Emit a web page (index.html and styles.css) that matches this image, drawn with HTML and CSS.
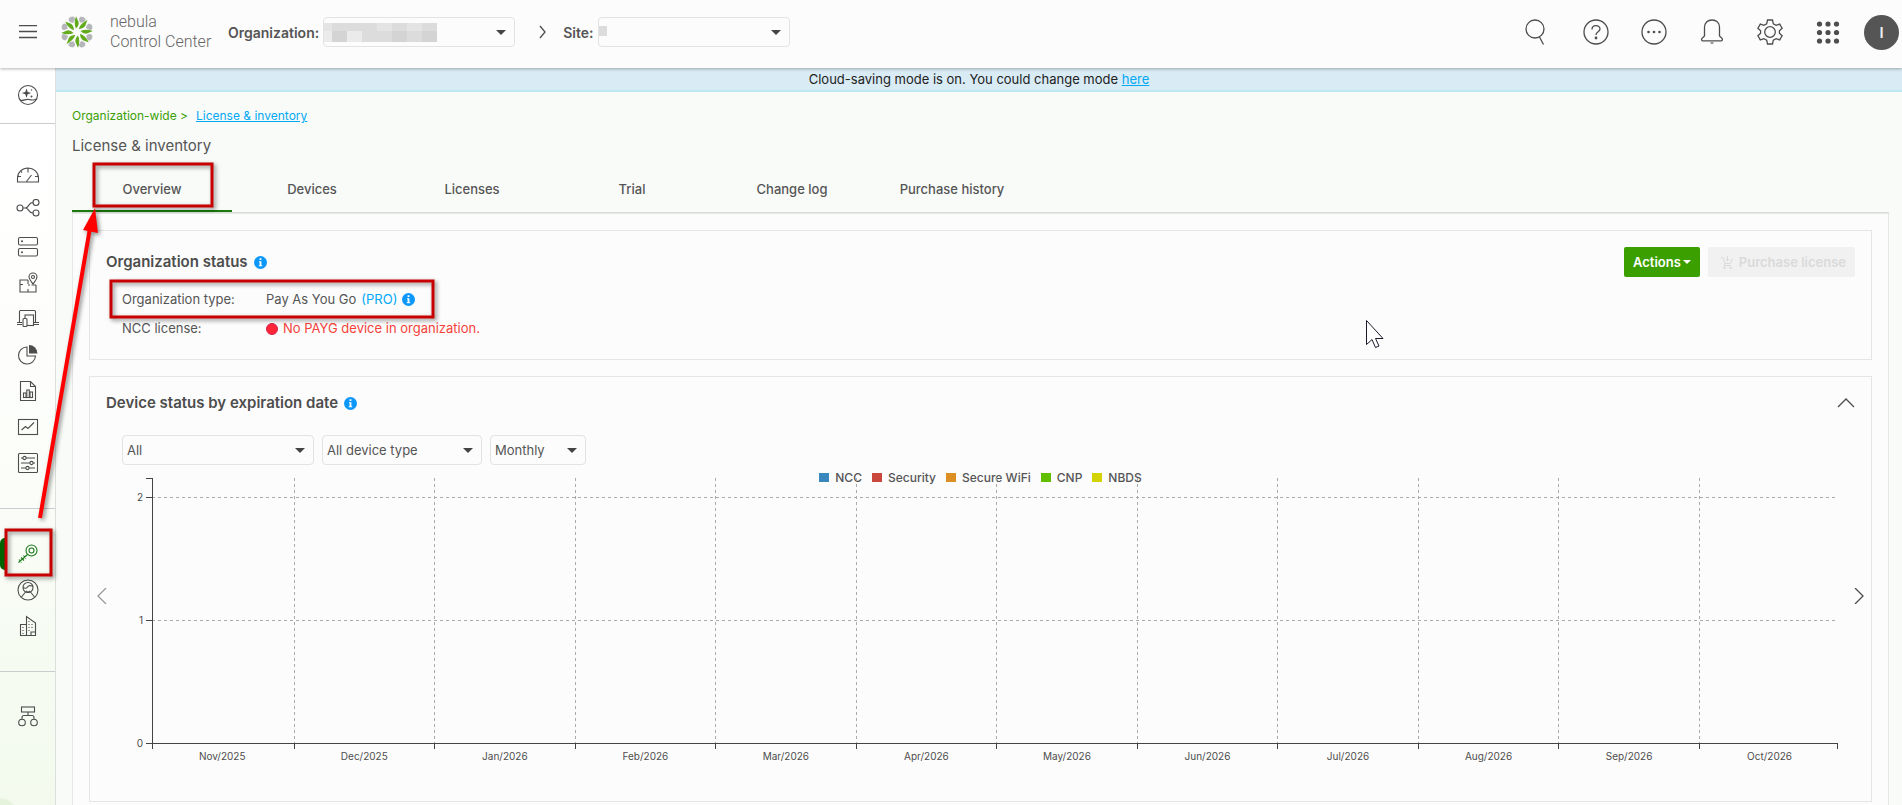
FILE: index.html
```html
<!DOCTYPE html>
<html lang="en">
  <head>
    <meta charset="UTF-8" />
    <meta name="viewport" content="width=device-width, initial-scale=1.0" />
    <title>License &amp; inventory</title>
    <link rel="stylesheet" href="styles.css">
  </head>
  <body>
    <header class="topbar">
      <button class="icon-btn menu-btn" aria-label="Menu">
        <svg width="18" height="14" viewBox="0 0 18 14"><path d="M0 .5h18M0 6.500h18M0 12.500h18" /></svg>
      </button>
      <a class="brand" href="#">
        <svg width="34" height="34" viewBox="-17 -17 34 34">
          <defs>
            <g id="petal">
              <path class="petal-grey" transform="rotate(22.500)" d="M-2.600-15.400Q0-17.200 2.800-15.400Q4-13.600 2.600-12L-.4-9.800Q-2.800-11.400-3.400-13.600Z" />
              <path class="petal-green" d="M-1-15.800L1.600-10Q2.200-6.500-1-3.400Q-3.600-9-1-15.800Z" />
            </g>
          </defs>
          <use href="#petal" />
          <use href="#petal" transform="rotate(45)" />
          <use href="#petal" transform="rotate(90)" />
          <use href="#petal" transform="rotate(135)" />
          <use href="#petal" transform="rotate(180)" />
          <use href="#petal" transform="rotate(225)" />
          <use href="#petal" transform="rotate(270)" />
          <use href="#petal" transform="rotate(315)" />
        </svg>
        <span>nebula<br />Control Center</span>
      </a>
      <label class="picker-label" for="org">Organization:</label>
      <div class="picker">
        <select id="org"><option></option></select>
        <svg class="mask" width="113" height="19" viewBox="0 0 113 19">
          <path fill="#e4e4e4" d="M0 0h113v19H0z" />
          <path fill="#dcdcdc" d="M8 0h15v8H8zM23 0h30v8H23zM68 0h15v8H68zM98 0h15v8H98zM38 8h30v11H38zM83 8h15v11H83z" />
          <path fill="#d4d4d4" d="M8 8h15v11H8zM68 8h15v11H68zM98 8h15v11H98z" />
          <path fill="#ebebeb" d="M0 8h8v11H0zM23 8h15v11H23z" />
        </svg>
      </div>
      <svg class="crumb-arrow" width="8" height="14" viewBox="0 0 8 14"><path d="M1 1l5 6-5 6" /></svg>
      <label class="picker-label" for="site">Site:</label>
      <div class="picker">
        <select id="site"><option></option></select>
        <svg class="mask" width="8" height="19"><path fill="#dcdcdc" d="M0 3h8v10H0z" /></svg>
      </div>
      <nav class="tools">
        <button class="icon-btn" aria-label="Search">
          <svg width="26" height="26" viewBox="0 0 26 26"><circle cx="10" cy="10" r="9" /><path d="M14.500 18l4 7.500" /></svg>
        </button>
        <button class="icon-btn" aria-label="Help">
          <svg width="26" height="26" viewBox="0 0 26 26"><circle cx="13" cy="13" r="12" /><path d="M9 10.500c0-5 8-5 8-.5 0 3-4 2.500-4 6" /><circle class="dot" cx="13" cy="19" r="1.400" /></svg>
        </button>
        <button class="icon-btn" aria-label="More">
          <svg width="26" height="26" viewBox="0 0 26 26"><circle cx="13" cy="13" r="12" /><circle class="dot" cx="7.500" cy="13" r="1.300" /><circle class="dot" cx="13" cy="13" r="1.300" /><circle class="dot" cx="18.500" cy="13" r="1.300" /></svg>
        </button>
        <button class="icon-btn" aria-label="Notifications">
          <svg width="26" height="26" viewBox="0 0 26 26"><path d="M5.500 17V8.500C5.500 4 8.500 1 13 1s7.500 3 7.500 7.500V17l2.700 2.500q.8 2.300-1.200 2.300H4q-2 0-1.200-2.300z" /><path class="dot" d="M11 23.500h4q-2 2.600-4 0z" /></svg>
        </button>
        <button class="icon-btn" aria-label="Settings">
          <svg width="26" height="26" viewBox="0 0 26 26"><circle cx="13" cy="13" r="5.300" /><path d="M10.500 1h5l.8 3.800 2.800 1.600 3.600-1.300 2.400 4.200-2.700 2.400v2.600l2.700 2.400-2.400 4.200-3.600-1.300-2.800 1.600-.8 3.800h-5l-.8-3.800-2.800-1.600-3.600 1.300-2.400-4.200 2.700-2.400v-2.600L.9 9.300l2.400-4.200 3.600 1.300 2.800-1.600z" /></svg>
        </button>
        <button class="icon-btn" aria-label="Apps">
          <svg width="26" height="26" viewBox="0 0 26 26"><g class="dot"><circle cx="4.500" cy="5" r="2.600" /><circle cx="13" cy="5" r="2.600" /><circle cx="21.500" cy="5" r="2.600" /><circle cx="4.500" cy="13.500" r="2.600" /><circle cx="13" cy="13.500" r="2.600" /><circle cx="21.500" cy="13.500" r="2.600" /><circle cx="4.500" cy="22" r="2.600" /><circle cx="13" cy="22" r="2.600" /><circle cx="21.500" cy="22" r="2.600" /></g></svg>
        </button>
        <button class="avatar">I</button>
      </nav>
    </header>

    <div class="layout">
      <nav class="sidebar">
        <div class="group group-ai">
          <a href="#" aria-label="Assistant">
            <svg viewBox="0 0 24 24"><circle cx="12" cy="12" r="9.500" /><path class="dot" d="M10.500 5.500l1.200 3.400 3.500 1.200-3.500 1.200-1.200 3.500-1.200-3.500-3.500-1.200 3.500-1.200z" /><path d="M4 17c4 1.500 5-1.500 9-.5s5 1 7.500-.5" /><circle class="dot" cx="15.500" cy="13.500" r="1" /><circle class="dot" cx="15.500" cy="7" r=".7" /></svg>
          </a>
        </div>
        <div class="group">
          <a href="#" aria-label="Dashboard">
            <svg viewBox="0 0 24 24"><path d="M1.500 19v-4a10.500 10 0 0 1 21 0v4zM12 5.500v4M2 13.500h3M19 13.500h3M10.500 18.500l5-6.500M5 8.500l1 1" /></svg>
          </a>
          <a href="#" aria-label="Topology">
            <svg viewBox="0 0 24 24"><circle cx="4" cy="9" r="3" /><circle cx="20" cy="3.500" r="3" /><circle cx="20" cy="14" r="3" /><path d="M7 9h2.500C13 9 12 3.500 17 3.500M9.500 9c3.500 0 2.500 5 7.500 5" /></svg>
          </a>
          <a href="#" aria-label="Devices">
            <svg viewBox="0 0 24 24"><rect x="2.500" y="2.500" width="19" height="7.500" rx="1.500" /><rect x="2.500" y="13.500" width="19" height="7.500" rx="1.500" /><circle class="dot" cx="6" cy="6.200" r="1" /><circle class="dot" cx="6" cy="17.200" r="1" /></svg>
          </a>
          <a href="#" aria-label="Map">
            <svg viewBox="0 0 24 24"><path d="M12 9H4v12h16v-7M4 13.500h3M12 9v4M12 18v3M15.500 14H20M12 14h2" /><path d="M17 13c-2.500-3.500-4-5-4-7a4 4 0 0 1 8 0c0 2-1.500 3.500-4 7z" /><circle cx="17" cy="6" r="1.500" /></svg>
          </a>
          <a href="#" aria-label="Clients">
            <svg viewBox="0 0 24 24"><path d="M3.500 16V4.500q0-1 1-1h14q1 0 1 1V16M1 15.500h5M1 17.500h5M18 15.500h5M18 17.500h5" /><rect x="9" y="8" width="8.500" height="10.500" /><rect class="solid" x="7" y="11.500" width="4" height="8" rx="1" /></svg>
          </a>
          <a href="#" aria-label="Usage">
            <svg viewBox="0 0 24 24"><path d="M11 4a8.500 8.500 0 1 0 8.500 9H11z" /><path class="dot" d="M13 2v8.500h8.500A8.500 8.500 0 0 0 13 2z" /></svg>
          </a>
          <a href="#" aria-label="Reports">
            <svg viewBox="0 0 24 24"><path d="M4.500 2.500h10l5 5v14h-15zM14.500 2.500v5h5M7 18.500h10" /><rect x="7.500" y="14" width="2.500" height="4.500" /><rect x="10.800" y="11" width="2.500" height="7.500" /><rect x="14" y="13" width="2.500" height="5.500" /></svg>
          </a>
          <a href="#" aria-label="Trends">
            <svg viewBox="0 0 24 24"><rect x="2.500" y="4.500" width="19" height="15" /><path d="M5.500 15l4-3.500 2.500 2 6-6" /></svg>
          </a>
          <a href="#" aria-label="Configure">
            <svg viewBox="0 0 24 24"><rect x="2.500" y="2.500" width="19" height="19" rx="1" /><path d="M5 7h2M10 7h9M5 12h9M17 12h2M5 17h5M13 17h6" /><circle cx="8.500" cy="7" r="1.600" /><circle cx="15.500" cy="12" r="1.600" /><circle cx="11.500" cy="17" r="1.600" /></svg>
          </a>
        </div>
        <div class="group">
          <a class="active" href="#" aria-label="License and inventory">
            <svg viewBox="0 0 24 24"><circle cx="15.500" cy="8.500" r="5.500" /><circle cx="15.500" cy="8.500" r="2.500" /><path d="M11.500 12.500l-9 8M5 15.500l3 3M3 17.500l2.500 3M7.500 13.500l2.500 3" /></svg>
          </a>
          <a href="#" aria-label="Administrators">
            <svg viewBox="0 0 24 24"><circle cx="12" cy="12" r="10" /><circle cx="12" cy="9.500" r="5" /><path d="M7 9.500q3 1.500 4 0t3-2q1 0 3 1M9.500 14L5.500 19M14.500 14l4 5M12 14.500l-2-1.500M12 14.500l2-1.500" /></svg>
          </a>
          <a href="#" aria-label="Sites">
            <svg viewBox="0 0 24 24"><path d="M4.500 21.500V10.500h6V2.500l9 6.500v12.500zM10.500 2.500v19M15 21v-3h4M13 7v1M13 10v1M16 10v1M13 13v1M16 13v1M13 16v1M7 13v1M7 16v1M7 19v1" /></svg>
          </a>
        </div>
        <div class="group">
          <a href="#" aria-label="Groups">
            <svg viewBox="0 0 24 24"><rect x="5.500" y="2" width="13" height="5" /><path d="M12 7v3M6 14v-1.500q0-2 2-2h8q2 0 2 2V14" /><circle cx="6" cy="17.500" r="3.300" /><circle cx="18" cy="17.500" r="3.300" /></svg>
          </a>
        </div>
      </nav>

      <main class="content">
        <p class="banner">Cloud-saving mode is on. You could change mode <a href="#">here</a></p>
        <p class="breadcrumb"><span>Organization-wide &gt;</span><a href="#">License &amp; inventory</a></p>
        <h1>License &amp; inventory</h1>
        <div class="tabs" role="tablist">
          <button class="tab selected" role="tab">Overview</button>
          <button class="tab" role="tab">Devices</button>
          <button class="tab" role="tab">Licenses</button>
          <button class="tab" role="tab">Trial</button>
          <button class="tab" role="tab">Change log</button>
          <button class="tab" role="tab">Purchase history</button>
        </div>

        <div class="panel">
          <section class="card">
            <div class="card-head">
              <h2>Organization status</h2>
              <svg class="info" width="13" height="13" viewBox="0 0 13 13"><circle cx="6.500" cy="6.500" r="6.500" /><path d="M5.600 2.200h1.800v1.800H5.600zM5 5.200h2.400v4h.8v1H4.800v-1h.8v-3H5z" /></svg>
              <div class="actions">
                <button class="btn btn-green">Actions<svg width="8" height="4"><path d="M0 0h8L4 4z" /></svg></button>
                <button class="btn btn-off" disabled>
                  <svg width="12" height="13" viewBox="0 0 12 13"><path class="line" d="M0 1.500h1.800l2.200 6h5.500l2-5M4 7.500L3 9.500h7M6.500 0v4.500M4.600 3l1.900 1.900L8.400 3" /><circle cx="3.500" cy="11.700" r="1.200" /><circle cx="9.500" cy="11.700" r="1.200" /></svg>Purchase license
                </button>
              </div>
            </div>
            <dl class="facts">
              <dt>Organization type:</dt>
              <dd>Pay As You Go <a href="#">(PRO)</a><svg class="info" width="13" height="13" viewBox="0 0 13 13"><circle cx="6.500" cy="6.500" r="6.500" /><path d="M5.600 2.200h1.800v1.800H5.600zM5 5.200h2.400v4h.8v1H4.800v-1h.8v-3H5z" /></svg></dd>
              <dt>NCC license:</dt>
              <dd class="alert"><i class="status-dot"></i>No PAYG device in organization.</dd>
            </dl>
          </section>

          <section class="card chart-card">
            <div class="card-head">
              <h2>Device status by expiration date</h2>
              <svg class="info" width="13" height="13" viewBox="0 0 13 13"><circle cx="6.500" cy="6.500" r="6.500" /><path d="M5.600 2.200h1.800v1.800H5.600zM5 5.200h2.400v4h.8v1H4.800v-1h.8v-3H5z" /></svg>
              <button class="icon-btn collapse" aria-label="Collapse">
                <svg width="18" height="10" viewBox="0 0 18 10"><path d="M1 9l8-8 8 8" /></svg>
              </button>
            </div>
            <div class="filters">
              <select class="w-lg" aria-label="License"><option>All</option></select>
              <select class="w-md" aria-label="Device type"><option>All device type</option></select>
              <select class="w-sm" aria-label="Period"><option>Monthly</option></select>
            </div>
            <ul class="legend">
              <li class="ncc">NCC</li>
              <li class="security">Security</li>
              <li class="wifi">Secure WiFi</li>
              <li class="cnp">CNP</li>
              <li class="nbds">NBDS</li>
            </ul>
            <div class="chart-row">
              <button class="icon-btn step prev" aria-label="Previous">
                <svg width="10" height="16" viewBox="0 0 10 16"><path d="M9 0L1 8l8 8" /></svg>
              </button>
              <svg id="chart" class="chart" height="300"></svg>
              <button class="icon-btn step" aria-label="Next">
                <svg width="10" height="16" viewBox="0 0 10 16"><path d="M1 0l8 8-8 8" /></svg>
              </button>
            </div>
          </section>
        </div>
      </main>
    </div>

    <!-- callouts on top of the page -->
    <svg class="callouts" width="440" height="600">
      <rect x="94" y="164" width="118" height="42" />
      <rect x="111" y="281" width="322" height="36" />
      <rect x="6" y="530" width="45" height="45" />
      <path class="shaft" d="M40 518L90 228" />
      <path class="head" d="M95 208L83 230 98 233z" />
    </svg>
    <svg class="pointer" width="19" height="28" viewBox="0 0 19 28">
      <path d="M.5.500v24l5.500-5 3.500 8 3.500-1.500-3.500-7.500h7.500z" />
    </svg>

    <script>
      const months = [
        "Nov/2025", "Dec/2025", "Jan/2026", "Feb/2026", "Mar/2026", "Apr/2026",
        "May/2026", "Jun/2026", "Jul/2026", "Aug/2026", "Sep/2026", "Oct/2026",
      ];
      // month boundaries, in percent of the plot width
      const firstTick = 8.43;
      const tickStep = 8.34;
      const plotBottom = 265;
      const yTicks = [
        { label: "2", y: 19 },
        { label: "1", y: 142 },
        { label: "0", y: plotBottom },
      ];

      function line(x1, y1, x2, y2, cls) {
        return `<line class="${cls}" x1="${x1}" y1="${y1}" x2="${x2}" y2="${y2}" />`;
      }

      function renderChart() {
        let out = "";

        yTicks.forEach((t) => {
          if (t.y !== plotBottom) out += line("0", t.y, "100%", t.y, "grid");
          out += line(-6, t.y, 0, t.y, "axis");
          out += `<text x="-9" y="${t.y + 4}" text-anchor="end">${t.label}</text>`;
        });

        months.forEach((m, i) => {
          const pos = i === 0 ? 0 : firstTick + (i - 1) * tickStep;
          const x = `${pos}%`;
          if (i > 0) out += line(x, 0, x, plotBottom, "grid");
          out += line(x, plotBottom, x, plotBottom + 6, "axis");
          out += `<text x="${pos + tickStep / 2}%" y="282" text-anchor="middle">${m}</text>`;
        });

        out += line("100%", plotBottom, "100%", plotBottom + 6, "axis");
        out += line(0, plotBottom, "100%", plotBottom, "axis");
        out += line(0, 0, 0, plotBottom, "axis");
        out += line(-6, 0, 0, 0, "axis");
        document.getElementById("chart").innerHTML = out;
      }

      window.onload = renderChart;
    </script>
  </body>
</html>
```
FILE: styles.css
```css
* {
  box-sizing: border-box;
}

body {
  font-family: Inter, "Open Sans", sans-serif;
  font-size: 13px;
  color: #555;
  margin: 0;
  min-height: 100vh;
  display: flex;
  flex-direction: column;
  position: relative;
  background-color: #fcfcfc;
}

h1,
h2,
p,
ul,
dl,
dd {
  margin: 0;
  padding: 0;
}

a {
  color: #03a9f4;
}

button {
  font: inherit;
  color: inherit;
  border: 0;
  padding: 0;
  background: none;
}

select {
  appearance: none;
  font: inherit;
  color: #555;
  height: 30px;
  padding: 0 4px;
  border: 1px solid #e3e3e3;
  border-radius: 4px;
  background: #fcfcfc url("data:image/svg+xml,%3Csvg xmlns='http://www.w3.org/2000/svg' width='10' height='5'%3E%3Cpath fill='%23444' d='M0 0h10L5 5z'/%3E%3C/svg%3E") no-repeat right 8px center;
}

/* top bar */
.topbar {
  height: 68px;
  display: flex;
  align-items: center;
  padding: 0 3px 4px 0;
  box-shadow: 0 1px 3px rgba(0, 0, 0, 0.3);
  position: relative;
  z-index: 1;
}

.icon-btn {
  display: flex;
  align-items: center;
  justify-content: center;
}

.icon-btn svg,
.crumb-arrow {
  fill: none;
  stroke: #4d4d4d;
  stroke-width: 1.3;
}

.icon-btn .dot {
  fill: #4d4d4d;
  stroke: none;
}

.menu-btn {
  width: 56px;
  height: 34px;
}

.brand {
  display: flex;
  align-items: center;
  gap: 16px;
  margin-left: 4px;
  width: 168px;
  font-family: Roboto, sans-serif;
  font-size: 16px;
  font-weight: 300;
  line-height: 20px;
  color: #666;
  text-decoration: none;
}

.petal-grey {
  fill: #b4b6b9;
}

.petal-green {
  fill: #62ab1d;
}

.picker-label {
  font-size: 14px;
  font-weight: 600;
  margin-right: 4px;
}

.picker {
  position: relative;
}

.picker select {
  width: 192px;
  display: block;
}

.mask {
  position: absolute;
  left: 1px;
  top: 6px;
}

.crumb-arrow {
  margin: 0 16px 0 24px;
}

.tools {
  margin-left: auto;
  display: flex;
  align-items: center;
  gap: 32px;
}

.avatar {
  width: 35px;
  height: 35px;
  margin-left: -9px;
  border-radius: 50%;
  background-color: #555;
  color: #eee;
  font-size: 15px;
  font-weight: 600;
}

.layout {
  flex: 1;
  display: flex;
}

/* side menu */
.sidebar {
  width: 56px;
  border-right: 1px solid #dcdfdc;
  background: radial-gradient(circle at 0 100%, #e6f3dc 18px, transparent 19px) no-repeat 0 12px,
    linear-gradient(#fff, #fdfefc 40%, #f3faed);
}

.group {
  padding: 27px 0;
  border-bottom: 1px solid #c9ccd0;
}

.group:last-child {
  border-bottom: 0;
}

.group-ai {
  padding: 9px 0 10px;
}

.group-ai + .group {
  padding-top: 33px;
}

.sidebar a {
  display: flex;
  align-items: center;
  justify-content: center;
  height: 36px;
  position: relative;
}

.sidebar svg {
  width: 24px;
  height: 24px;
  fill: none;
  stroke: #4d4d4d;
  stroke-width: 1.1;
}

.sidebar .dot {
  fill: #4d4d4d;
  stroke: none;
}

.sidebar .solid {
  fill: #fff;
}

.sidebar .active::before {
  content: "";
  position: absolute;
  left: 0;
  top: 2px;
  width: 6px;
  height: 32px;
  border-radius: 5px 0 0 5px;
  background-color: #006400;
}

.sidebar .active svg {
  stroke: #1b7a1b;
}

/* page */
.content {
  flex: 1;
  display: flex;
  flex-direction: column;
  background-color: #f9fbf9;
}

.banner {
  line-height: 22px;
  text-align: center;
  color: #222;
  background-color: #d9ebf5;
  border-bottom: 2px solid #bce8f1;
}

.breadcrumb {
  font-size: 12px;
  line-height: 20px;
  margin: 14px 16px 8px;
  color: #3b9f07;
}

.breadcrumb a {
  margin-left: 8px;
}

h1 {
  font-size: 15px;
  font-weight: 400;
  line-height: 24px;
  margin: 0 16px 8px;
}

.tabs {
  display: flex;
  margin: 0 13px 0 16px;
  border-bottom: 1px solid #d8dcd8;
}

.tab {
  width: 160px;
  height: 46px;
  padding-top: 2px;
  font-weight: 500;
  border-bottom: 2px solid transparent;
}

.tab.selected {
  border-bottom-color: #1a7a0a;
}

.panel {
  flex: 1;
  margin: 0 13px 0 16px;
  padding: 16px 16px 0;
  border: 1px solid #e6e8e6;
  border-bottom: 0;
  background-color: #fcfcfc;
}

.card {
  padding: 16px;
  border: 1px solid #e5e5e5;
}

.card-head {
  display: flex;
  align-items: center;
}

h2 {
  font-size: 15px;
  font-weight: 600;
  line-height: 20px;
  margin-right: 6px;
  color: #4d4d4d;
}

.info {
  fill: #0c97fb;
}

.info path {
  fill: #fff;
}

.actions {
  margin-left: auto;
  display: flex;
  gap: 8px;
}

.btn {
  height: 30px;
  padding: 0 9px;
  border-radius: 2px;
  font-weight: 600;
  display: flex;
  align-items: center;
}

.btn-green {
  color: #fff;
  background-color: #3c9f00;
  gap: 2px;
}

.btn-green svg {
  fill: #fff;
}

.btn-off {
  color: #dadada;
  background-color: #f1f1f1;
  padding-left: 13px;
  gap: 6px;
}

.btn-off svg {
  fill: #dadada;
}

.btn-off .line {
  fill: none;
  stroke: #dadada;
}

.facts {
  display: grid;
  grid-template-columns: 144px 1fr;
  line-height: 29px;
  margin: 8px 0 0 16px;
}

.facts dd {
  display: flex;
  align-items: center;
  gap: 5px;
}

.facts a {
  text-decoration: none;
}

.facts .alert {
  color: #f4433a;
}

.status-dot {
  width: 12px;
  height: 12px;
  border-radius: 50%;
  background-color: #ff2638;
  border: 1px solid #dc1f4e;
}

/* chart */
.chart-card {
  margin-top: 16px;
  padding: 16px 0 23px;
}

.chart-card .card-head,
.filters {
  padding: 0 16px;
}

.collapse {
  margin-left: auto;
}

.filters {
  display: flex;
  gap: 8px;
  margin: 22px 16px 5px;
}

.w-lg {
  width: 192px;
}

.w-md {
  width: 160px;
}

.w-sm {
  width: 96px;
}

.legend {
  display: flex;
  justify-content: center;
  gap: 10px;
  list-style: none;
  font-size: 12px;
  font-weight: 500;
  line-height: 16px;
}

.legend li::before {
  content: "";
  display: inline-block;
  width: 10px;
  height: 9px;
  margin-right: 6px;
  background-color: #3a87bd;
}

.legend .security::before {
  background-color: #c9473d;
}

.legend .wifi::before {
  background-color: #dc8f22;
}

.legend .cnp::before {
  background-color: #62bf00;
}

.legend .nbds::before {
  background-color: #d3d300;
}

.chart-row {
  display: flex;
  margin-top: -8px;
}

.step {
  width: 24px;
  height: 236px;
}

.step.prev svg {
  stroke: #999;
}

.chart {
  flex: 1;
  min-width: 0;
  margin: 0 10px 0 38px;
  overflow: visible;
}

.chart text {
  font-size: 10px;
  fill: #4d4d4d;
}

.chart line {
  shape-rendering: crispEdges;
}

.axis {
  stroke: #444;
}

.grid {
  stroke: #aaa;
  stroke-dasharray: 3 3;
}

/* overlays */
.callouts {
  position: absolute;
  left: 0;
  top: 0;
  z-index: 2;
  pointer-events: none;
  filter: drop-shadow(2px 2px 2px rgba(0, 0, 0, 0.45));
}

.callouts rect {
  fill: none;
  stroke: #c80000;
  stroke-width: 3;
}

.shaft {
  stroke: #f00;
  stroke-width: 4;
}

.head {
  fill: #f00;
}

.pointer {
  position: absolute;
  left: 1366px;
  top: 320px;
  z-index: 2;
  fill: #fff;
  stroke: #1a1a2a;
  pointer-events: none;
}
```
